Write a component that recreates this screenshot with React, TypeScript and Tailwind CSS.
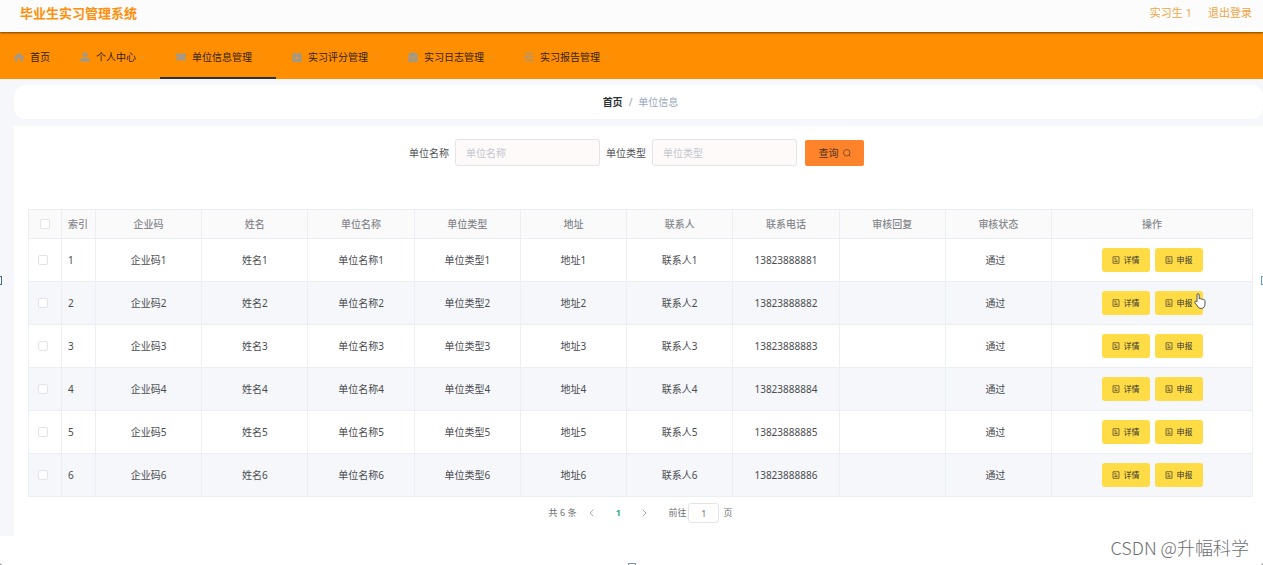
import { useState } from "react"

type IconName = "home" | "user" | "ticket" | "release" | "order" | "operation"

const NAV_ITEMS: { label: string; icon: IconName }[] = [
  { label: "首页", icon: "home" },
  { label: "个人中心", icon: "user" },
  { label: "单位信息管理", icon: "ticket" },
  { label: "实习评分管理", icon: "release" },
  { label: "实习日志管理", icon: "order" },
  { label: "实习报告管理", icon: "operation" },
]

const COLUMNS = ["企业码", "姓名", "单位名称", "单位类型", "地址", "联系人", "联系电话", "审核回复"]

const ROWS = [1, 2, 3, 4, 5, 6].map((n) => ({
  id: n,
  cells: [`企业码${n}`, `姓名${n}`, `单位名称${n}`, `单位类型${n}`, `地址${n}`, `联系人${n}`, `1382388888${n}`, ""],
  status: "通过",
}))

function NavIcon({ name }: { name: IconName }) {
  return (
    <svg className="w-2.5 h-2.5 mr-1.5 shrink-0 text-[#a0998a]" viewBox="0 0 20 20" fill="currentColor" aria-hidden="true">
      {name === "home" && <path d="M10 1.500L0 10v2h2v7h5v-5a3 3 0 016 0v5h5v-7h2v-2z" />}
      {name === "user" && (
        <>
          <circle cx="10" cy="5.500" r="5" />
          <path d="M0 19v-2.500C0 13.500 2 12 4.500 12h11c2.500 0 4.500 1.500 4.500 4.500V19z" />
        </>
      )}
      {name === "ticket" && (
        <path fillRule="evenodd" d="M0 3h6l1.500 2L9 3h11v4.500a2.500 2.500 0 000 5V17H9l-1.500-2L6 17H0v-4.500a2.500 2.500 0 000-5zM6.500 7v2h2V7zm0 4v2h2v-2z" />
      )}
      {name === "release" && (
        <>
          <path d="M1 3h4V1h3v3h4V1h3v2h4v17H1z" />
          <path d="M7 9l6 6M13 9l-6 6" stroke="#f59a20" strokeWidth="1.800" />
        </>
      )}
      {name === "order" && (
        <>
          <path d="M1 3h4V1h10v2h4v17H1z" />
          <path d="M5 8.500h10M5 12h10M5 15.500h10" stroke="#d99a40" strokeWidth="1.200" />
        </>
      )}
      {name === "operation" && (
        <path d="M0 2.500h10V1h3v1.500h7v2h-7V6h-3V4.500H0zM0 9h4V7.500h3V9h13v2H7v1.500H4V11H0zM0 15.500h11V14h3v1.500h6v2h-6V19h-3v-1.500H0z" />
      )}
    </svg>
  )
}

function TicketsIcon() {
  return (
    <svg className="w-2 h-2 shrink-0" viewBox="0 0 16 16" fill="none" stroke="currentColor" aria-hidden="true">
      <path strokeWidth="1.300" d="M2 1.500h12v13H2zM5 5h3M5 8h6M5 11h6" />
    </svg>
  )
}

function Checkbox({ label }: { label: string }) {
  return (
    <input
      type="checkbox"
      aria-label={label}
      className="block appearance-none w-2.5 h-2.5 rounded-xs border border-[#e2e4ea] bg-white checked:bg-[#ff832a]"
    />
  )
}

function ActionButton({ text }: { text: string }) {
  return (
    <button className="flex items-center justify-center gap-1 w-12 h-6 rounded-[3px] bg-[#ffdb45] text-[8px] text-[#333]">
      <TicketsIcon />
      {text}
    </button>
  )
}

function Header() {
  return (
    <header className="relative z-10 flex justify-between h-8 pl-5 pr-[11px] bg-[#fcfcfc] shadow-[0_1px_2px_rgba(0,0,0,0.55)]">
      <h1 className="text-[13px] leading-[26px] font-bold text-[#ff8f0a]">毕业生实习管理系统</h1>
      <div className="flex gap-4 text-[11px] leading-[26px] text-[#f0a545]">
        <a href="#">实习生 1</a>
        <a href="#">退出登录</a>
      </div>
    </header>
  )
}

function Nav() {
  const [active, setActive] = useState(2)

  return (
    <nav className="flex h-[47px] bg-[#ff8f00]">
      {NAV_ITEMS.map((item, i) => (
        <a
          key={item.label}
          href="#"
          onClick={() => setActive(i)}
          className={`flex items-center pt-1 pr-3.5 border-b-2 text-[#33210a] ${i === 0 ? "pl-3.5" : "pl-4"} ${
            i === active ? "border-[#303133]" : "border-transparent"
          }`}
        >
          <NavIcon name={item.icon} />
          {item.label}
          {i > 0 && (
            <svg className="w-1.5 h-1.5 ml-1 text-[#cf9d50]" viewBox="0 0 12 12" fill="none" stroke="currentColor" aria-hidden="true">
              <path strokeWidth="1.500" d="M1 3l5 5 5-5" />
            </svg>
          )}
        </a>
      ))}
    </nav>
  )
}

function SearchForm() {
  return (
    <form className="flex items-center justify-center pr-2 text-[#505256]" onSubmit={(e) => e.preventDefault()}>
      <label htmlFor="unit-name" className="mr-1.5">单位名称</label>
      <input
        id="unit-name"
        placeholder="单位名称"
        className="w-[145px] h-[27px] mr-1.5 px-2.5 rounded-[3px] border border-[#e3e5ea] bg-[#fdfaf9] placeholder:text-[#c3c6cf]"
      />
      <label htmlFor="unit-type" className="mr-1.5">单位类型</label>
      <input
        id="unit-type"
        placeholder="单位类型"
        className="w-[145px] h-[27px] mr-2 px-2.5 rounded-[3px] border border-[#e3e5ea] bg-[#fdfaf9] placeholder:text-[#c3c6cf]"
      />
      <button className="flex items-center justify-center gap-1 w-[59px] h-[26px] rounded-xs bg-[#ff832a] text-[#4c3322]">
        查询
        <svg className="w-2 h-2" viewBox="0 0 16 16" fill="none" stroke="currentColor" aria-hidden="true">
          <circle cx="7.500" cy="7.500" r="6.500" strokeWidth="1.300" />
          <path strokeWidth="1.300" d="M12 12l3 3" />
        </svg>
      </button>
    </form>
  )
}

function UnitTable() {
  return (
    <table className="w-full table-fixed border-collapse text-center text-[#4a4c50] [&_td]:border [&_td]:border-[#ebeef3] [&_th]:border [&_th]:border-[#ebeef3]">
      <colgroup>
        <col className="w-[33px]" />
        <col className="w-[34px]" />
        {COLUMNS.map((c) => (
          <col key={c} />
        ))}
        <col />
        <col className="w-[201px]" />
      </colgroup>
      <thead>
        <tr className="h-[29px] bg-[#fafafa] text-[#86888d] [&>th]:font-medium">
          <th className="pl-[11px]"><Checkbox label="全选" /></th>
          <th className="pl-1.5 text-left">索引</th>
          {COLUMNS.map((c) => (
            <th key={c}>{c}</th>
          ))}
          <th>审核状态</th>
          <th>操作</th>
        </tr>
      </thead>
      <tbody>
        {ROWS.map((row) => (
          <tr key={row.id} className="h-[43px] even:bg-[#f5f7fa]">
            <td className="pl-[9px]"><Checkbox label={`选择 ${row.id}`} /></td>
            <td className="pl-1.5 text-left">{row.id}</td>
            {row.cells.map((cell, i) => (
              <td key={i}>{cell}</td>
            ))}
            <td className="pr-1.5">{row.status}</td>
            <td>
              <div className="flex justify-center gap-[5px]">
                <ActionButton text="详情" />
                <ActionButton text="申报" />
              </div>
            </td>
          </tr>
        ))}
      </tbody>
    </table>
  )
}

function Pagination() {
  return (
    <div className="flex items-center justify-center mt-1.5 text-[9px] text-[#707276]">
      <span>共 6 条</span>
      <button className="ml-3 w-2 text-[#a9acb3]" aria-label="上一页">
        <svg className="w-2 h-2" viewBox="0 0 12 12" fill="none" stroke="currentColor">
          <path strokeWidth="1.500" d="M8 1L3 6l5 5" />
        </svg>
      </button>
      <button className="w-11 font-bold text-[#2fae8b]">1</button>
      <button className="mr-5 w-2 text-[#a9acb3]" aria-label="下一页">
        <svg className="w-2 h-2" viewBox="0 0 12 12" fill="none" stroke="currentColor">
          <path strokeWidth="1.500" d="M4 1l5 5-5 5" />
        </svg>
      </button>
      <label htmlFor="page-jump">前往</label>
      <input
        id="page-jump"
        defaultValue="1"
        className="w-[31px] h-5 ml-0.5 mr-1 rounded-[3px] border border-[#e3e5ea] bg-white text-center"
      />
      <span>页</span>
    </div>
  )
}

/* Grab points of the frame around the page */
function FrameHandles() {
  return (
    <div className="pointer-events-none" aria-hidden="true">
      <span className="absolute top-[276px] -left-1.5 w-2 h-[9px] border border-[#3f6b96] bg-white" />
      <span className="absolute top-[276px] -right-1.5 w-2 h-[9px] border border-[#5f9ac8] bg-white" />
      <span className="absolute -bottom-1.5 left-1/2 -translate-x-1/2 w-2 h-2 border border-[#6f94bf] bg-white" />
      <span className="absolute -bottom-1 -left-1 w-1.5 h-1.5 rounded-full border border-[#777]" />
      <span className="absolute -bottom-1 -right-1 w-1.5 h-1.5 rounded-full border border-[#777]" />
    </div>
  )
}

function HandCursor() {
  return (
    <svg className="absolute top-[293px] right-[57px] w-3 h-4" viewBox="0 0 12 16" aria-hidden="true">
      <path
        d="M3 9V2c0-1.800 2.200-1.800 2.200 0v4c.4-.8 1.800-.6 1.900.3.500-.6 1.700-.4 1.900.5.700-.5 2-.1 2 1V11c0 2.600-1.300 4.400-3.800 4.400-2 0-3-.9-3.800-2.400L.9 9.800C.2 8.500 1.600 7.600 2.400 8.500z"
        fill="white"
        stroke="#444"
        strokeWidth="0.900"
      />
    </svg>
  )
}

export default function App() {
  return (
    <div className="relative min-h-screen overflow-hidden bg-white font-['Noto_Sans','Noto_Sans_CJK_SC',sans-serif] text-[10px] leading-4">
      <Header />
      <Nav />
      <main className="pt-1.5 pl-3.5 bg-[#f5f7fa]">
        <div className="flex items-center justify-center gap-1.5 h-[34px] mb-[7px] pl-1 rounded-xl bg-white">
          <a href="#" className="font-bold text-[#303133]">首页</a>
          <span className="text-[#97a0b0]">/</span>
          <span className="text-[#97a8be]">单位信息</span>
        </div>
        <section className="pt-[13px] pr-2.5 pb-[13px] pl-3.5 bg-white">
          <div className="mb-[43px]">
            <SearchForm />
          </div>
          <UnitTable />
          <Pagination />
        </section>
      </main>
      <footer className="pr-3.5 text-right text-[18px] leading-[22px] font-light text-[#6c6e72] font-['Noto_Sans_CJK_SC',sans-serif]">
        CSDN @升幅科学
      </footer>
      <HandCursor />
      <FrameHandles />
    </div>
  )
}
